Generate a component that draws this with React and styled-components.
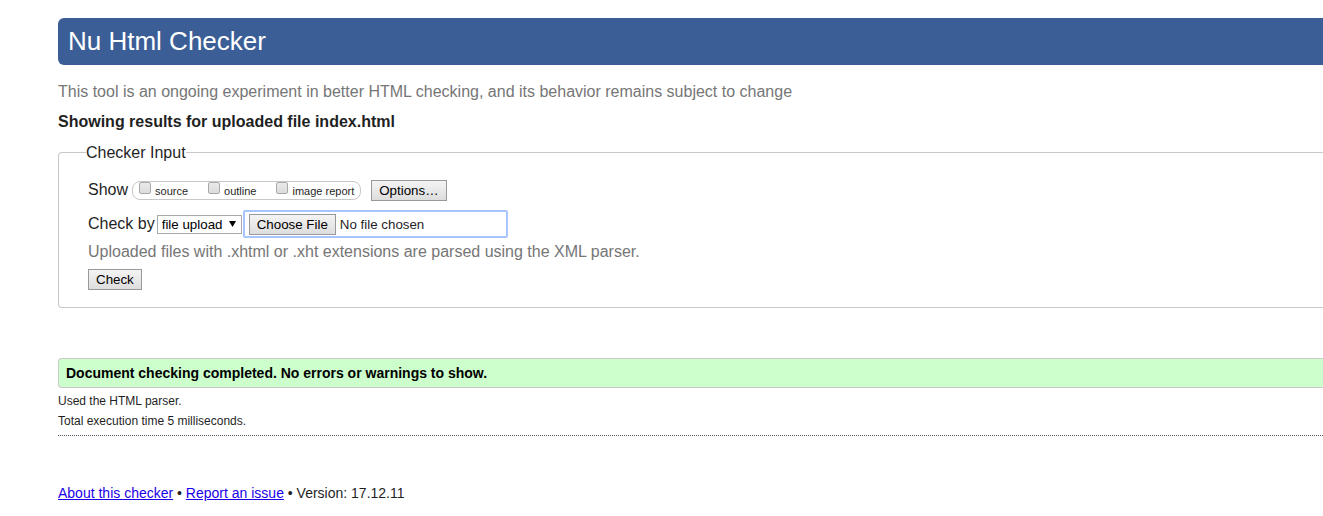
import React from "react";
import styled, { createGlobalStyle } from "styled-components";

const GlobalStyle = createGlobalStyle`
  *, *::before, *::after { box-sizing: border-box; }
  body {
    margin: 0;
    background: #fff;
    color: #1f1f1f;
    font: 16px/20px "Liberation Sans", Arial, sans-serif;
  }
  button, input, select { font-family: inherit; }
`;

const Page = styled.div`
  padding: 18px 0 12px 58px;
`;

const Banner = styled.h1`
  margin: 0;
  padding: 8px 10px 9px;
  border-radius: 6px 0 0 6px;
  background: #3b5e96;
  color: #fff;
  font-size: 26px;
  line-height: 30px;
  font-weight: 400;
`;

const Note = styled.p`
  margin: 0;
  color: #767676;
`;

const Intro = styled(Note)`
  margin-top: 17px;
`;

const ResultsTitle = styled.h2`
  margin: 10px 0 0;
  font-size: 16px;
  line-height: 20px;
`;

const InputGroup = styled.fieldset`
  min-width: 0;
  margin: 9px 0 0;
  padding: 17px 29px 11px;
  border: 1px solid #c8c8c8;
  border-right: 0;
  border-radius: 4px 0 0 4px;
`;

const Legend = styled.legend`
  margin-left: -2px;
  padding: 2px 0 0;
`;

const Row = styled.div`
  display: flex;
  align-items: center;
  height: ${(p) => p.$height}px;
  margin-bottom: ${(p) => p.$after || 0}px;
`;

const RowTitle = styled.span`
  padding-bottom: 2px;
`;

const ShowOptions = styled.div`
  display: flex;
  align-items: center;
  gap: 20px;
  height: 19px;
  margin: 0 10px 0 4px;
  padding: 0 6px;
  border: 1px solid #c8c8c8;
  border-radius: 8px;
`;

const CheckLabel = styled.label`
  display: flex;
  align-items: center;
  gap: 4px;
  padding-top: 2px;
  font-size: 11px;
  line-height: 17px;
`;

const Checkbox = styled.input`
  appearance: none;
  width: 12px;
  height: 12px;
  margin: 0 0 7px;
  border: 1px solid #a9a9a9;
  border-radius: 2px;
  background: linear-gradient(#e9e9e9, #dcdcdc);
  &:checked { background: #3b5e96; }
`;

const Button = styled.button`
  height: 21px;
  padding: 0 7px;
  border: 1px solid #999;
  border-radius: 0;
  background: linear-gradient(#f4f4f4, #dddddd);
  color: #000;
`;

const SelectBox = styled.div`
  position: relative;
  margin: 0 1px 0 2px;
`;

const Select = styled.select`
  display: block;
  appearance: none;
  width: 85px;
  height: 19px;
  padding: 0 4px;
  border: 1px solid #a9a9a9;
  border-radius: 0;
  background: #fff;
  color: #000;
`;

const Arrow = styled.svg`
  position: absolute;
  top: 6px;
  right: 6px;
  pointer-events: none;
`;

const FileInput = styled.input`
  width: 265px;
  height: 28px;
  padding: 1px 4px;
  border: 2px solid #a8c5ff;
  border-radius: 2px;
  outline: 0;
  color: #1f1f1f;
  &::file-selector-button {
    height: 21px;
    margin: 1px 4px 0 0;
    padding: 0 7px;
    border: 1px solid #999;
    border-radius: 0;
    background: linear-gradient(#f4f4f4, #dddddd);
    color: #000;
    font-family: inherit;
  }
`;

const Success = styled.p`
  margin: 50px 0 0;
  padding: 4px 7px;
  border: 1px solid #c8c8c8;
  border-right: 0;
  border-radius: 4px 0 0 4px;
  background: #ccffcc;
  color: #000;
  font-size: 14px;
  font-weight: 700;
`;

const Details = styled.div`
  padding: 3px 0 4px;
  border-bottom: 1px dotted #555;
  font-size: 12px;
  line-height: 20px;
  p { margin: 0; }
`;

const Footer = styled.footer`
  margin-top: 47px;
  font-size: 14px;
`;

const Link = styled.a`
  color: #1a00e8;
`;

const reports = ["source", "outline", "image report"];

export default function App() {
  return (
    <Page>
      <GlobalStyle />
      <Banner>Nu Html Checker</Banner>
      <Intro>
        This tool is an ongoing experiment in better HTML checking, and its behavior remains subject to change
      </Intro>
      <ResultsTitle>Showing results for uploaded file index.html</ResultsTitle>
      <form onSubmit={(e) => e.preventDefault()}>
        <InputGroup>
          <Legend>Checker Input</Legend>
          <Row $height={21} $after={9}>
            <RowTitle>Show</RowTitle>
            <ShowOptions>
              {reports.map((name) => (
                <CheckLabel key={name}>
                  <Checkbox type="checkbox" name={name} />
                  {name}
                </CheckLabel>
              ))}
            </ShowOptions>
            <Button type="button">Options…</Button>
          </Row>
          <Row $height={28} $after={4}>
            <label htmlFor="method">Check by</label>
            <SelectBox>
              <Select id="method" defaultValue="file">
                <option value="address">address</option>
                <option value="file">file upload</option>
                <option value="text">text input</option>
              </Select>
              <Arrow width="7" height="6" viewBox="0 0 7 6" aria-hidden="true">
                <path d="M0 0h7L3.5 6z" fill="#000" />
              </Arrow>
            </SelectBox>
            <FileInput type="file" aria-label="Upload a file" />
          </Row>
          <Note>Uploaded files with .xhtml or .xht extensions are parsed using the XML parser.</Note>
          <Row $height={34}>
            <Button type="submit">Check</Button>
          </Row>
        </InputGroup>
      </form>
      <Success>Document checking completed. No errors or warnings to show.</Success>
      <Details>
        <p>Used the HTML parser.</p>
        <p>Total execution time 5 milliseconds.</p>
      </Details>
      <Footer>
        <Link href="#about">About this checker</Link> • <Link href="#issues">Report an issue</Link> • Version: 17.12.11
      </Footer>
    </Page>
  );
}
